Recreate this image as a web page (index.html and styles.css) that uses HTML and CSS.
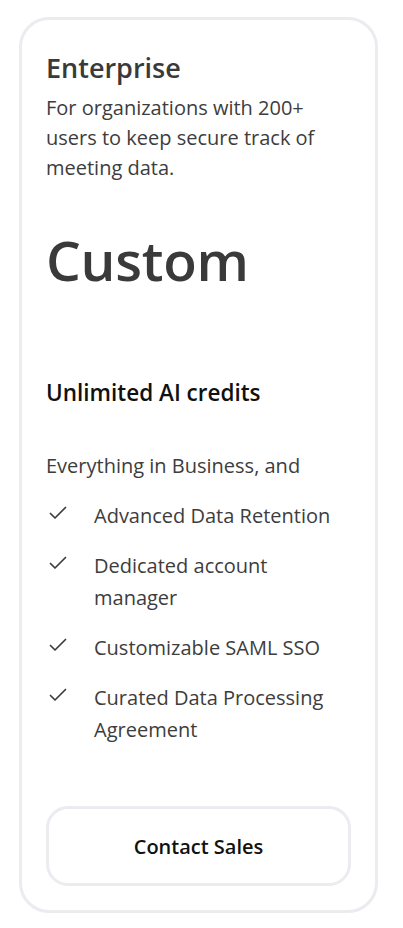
FILE: index.html
```html
<!DOCTYPE html>
<html>
<head>
<meta charset="utf-8">
<link rel="stylesheet" href="styles.css">
</head>
<body>
<div class="page">
  <div class="card">
    <h2 class="title">Enterprise</h2>
    <p class="desc">For organizations with 200+ users to keep secure track of meeting data.</p>
    <div class="price">Custom</div>
    <div class="credits">Unlimited AI credits</div>
    <p class="intro">Everything in Business, and</p>
    <ul class="features">
      <li><svg class="check" viewBox="0 0 20 20"><path d="M2.5 10.5 L7 15 L17.5 4.5" fill="none" stroke="#3d3d3d" stroke-width="1.7" stroke-linecap="round" stroke-linejoin="round"/></svg><span>Advanced Data Retention</span></li>
      <li><svg class="check" viewBox="0 0 20 20"><path d="M2.5 10.5 L7 15 L17.5 4.5" fill="none" stroke="#3d3d3d" stroke-width="1.7" stroke-linecap="round" stroke-linejoin="round"/></svg><span>Dedicated account manager</span></li>
      <li><svg class="check" viewBox="0 0 20 20"><path d="M2.5 10.5 L7 15 L17.5 4.5" fill="none" stroke="#3d3d3d" stroke-width="1.7" stroke-linecap="round" stroke-linejoin="round"/></svg><span>Customizable SAML SSO</span></li>
      <li><svg class="check" viewBox="0 0 20 20"><path d="M2.5 10.5 L7 15 L17.5 4.5" fill="none" stroke="#3d3d3d" stroke-width="1.7" stroke-linecap="round" stroke-linejoin="round"/></svg><span>Curated Data Processing Agreement</span></li>
    </ul>
    <button class="cta">Contact Sales</button>
  </div>
</div>
</body>
</html>
```

FILE: styles.css
```css
* { box-sizing: border-box; }
html, body { margin: 0; padding: 0; background: #fff; }
body { font-family: "Open Sans", "Noto Sans", sans-serif; color: #3d3d3d; }
.page { padding: 17px 25px 16px 19px; }
.card {
  border: 3px solid #ebebf0;
  border-radius: 30px;
  padding: 30px 24px 24px 24px;
  display: flex;
  flex-direction: column;
}
.title { margin: 0; font-size: 27px; font-weight: 600; line-height: 36px; color: #3a3a3a; }
.desc { margin: 7px 0 0; font-size: 20px; line-height: 30px; max-width: 300px; }
.price { margin-top: 37px; font-size: 55px; font-weight: 600; line-height: 80px; color: #3a3a3a; letter-spacing: -0.3px; }
.credits { margin-top: 78px; font-size: 22.5px; font-weight: 600; color: #111; line-height: 30px; }
.intro { margin: 43px 0 0; font-size: 20px; line-height: 30px; }
.features { list-style: none; margin: 19px 0 0; padding: 0; display: flex; flex-direction: column; gap: 18px; }
.features li { display: flex; align-items: flex-start; font-size: 20px; line-height: 32px; }
.features span { padding-right: 4px; }
.check { width: 20px; height: 20px; margin: 3px 26px 0 2px; flex: none; }
.cta {
  margin-top: 60px;
  height: 80px;
  border: 3px solid #ebebf0;
  border-radius: 22px;
  background: #fff;
  font-family: inherit;
  font-size: 20px;
  font-weight: 600;
  color: #111;
}
```
